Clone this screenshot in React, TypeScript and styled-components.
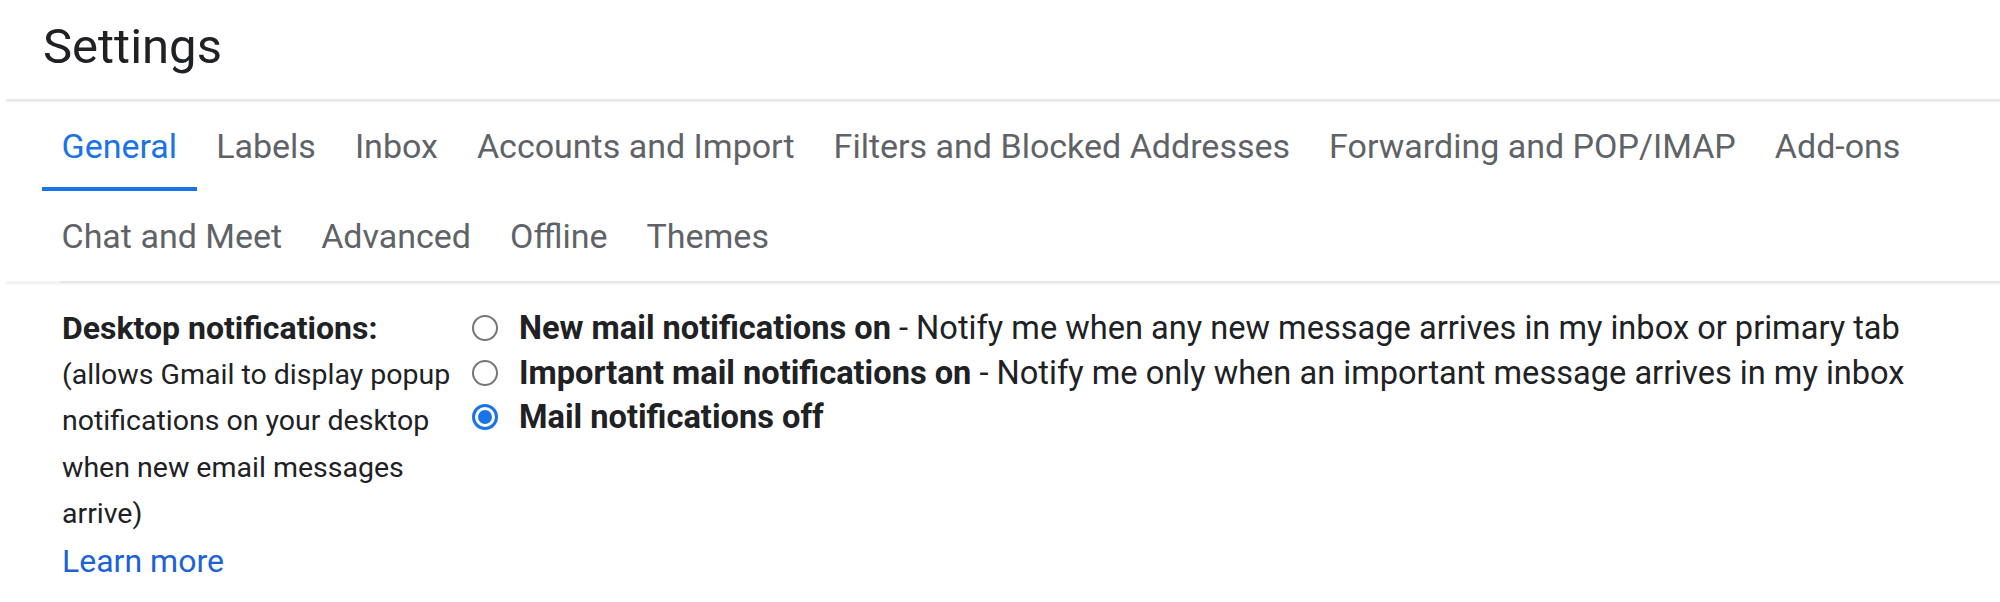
import React from "react";
import styled, { createGlobalStyle } from "styled-components";

const GlobalStyle = createGlobalStyle`
    html, body {
        margin: 0;
        padding: 0;
        background: #ffffff;
    }
    body {
        font-family: Roboto, "Liberation Sans", Arial, sans-serif;
        color: #202124;
        -webkit-font-smoothing: antialiased;
    }
`;

const Page = styled.div`
    width: 2000px;
    height: 602px;
    overflow: hidden;
    background: #ffffff;
`;

const Header = styled.header`
    height: 99px;
    box-sizing: border-box;
    padding: 18px 0 0 43px;
`;

const Title = styled.h1`
    margin: 0;
    font-size: 49px;
    font-weight: 400;
    line-height: 57px;
    color: #202124;
`;

const Divider = styled.div<{ $step?: boolean }>`
    height: 2px;
    margin-left: 6px;
    background: ${(props) =>
        props.$step
            ? "linear-gradient(to right, #f1f3f4 54px, #e6e7e9 54px)"
            : "#e8e9eb"};
    box-shadow: 0 1px 2px rgba(60, 64, 67, 0.1);
`;

const TabBar = styled.nav`
    display: flex;
    flex-wrap: wrap;
    padding-left: 42px;
`;

const Tab = styled.a<{ $active?: boolean }>`
    height: 90px;
    box-sizing: border-box;
    padding: 0 19.5px;
    display: flex;
    align-items: center;
    font-size: 34px;
    white-space: nowrap;
    cursor: pointer;
    color: ${(props) => (props.$active ? "#1a73e8" : "#5f6368")};
    box-shadow: ${(props) =>
        props.$active ? "inset 0 -4px 0 #1a73e8" : "none"};
`;

const Content = styled.section`
    display: flex;
    padding: 22px 0 0 62px;
`;

const LabelColumn = styled.div`
    width: 410px;
    flex-shrink: 0;
    line-height: 46.6px;
`;

const LabelTitle = styled.div`
    font-size: 32px;
    font-weight: 700;
    color: #202124;
`;

const LabelHint = styled.div`
    font-size: 28.5px;
    color: #202124;
`;

const LearnMore = styled.a`
    display: block;
    font-size: 32px;
    color: #1a62d6;
    text-decoration: none;
    cursor: pointer;
`;

const Options = styled.div`
    display: flex;
    flex-direction: column;
    padding-top: 1px;
`;

const OptionRow = styled.label`
    display: flex;
    align-items: center;
    gap: 21px;
    height: 44.5px;
    font-size: 32.6px;
    color: #202124;
    white-space: nowrap;
    cursor: pointer;
`;

const Radio = styled.span<{ $checked?: boolean }>`
    width: 26px;
    height: 26px;
    box-sizing: border-box;
    border-radius: 50%;
    flex-shrink: 0;
    display: flex;
    align-items: center;
    justify-content: center;
    border: ${(props) =>
        props.$checked ? "3px solid #1a73e8" : "2px solid #767676"};
    background: #ffffff;

    &::after {
        content: "";
        display: ${(props) => (props.$checked ? "block" : "none")};
        width: 14px;
        height: 14px;
        border-radius: 50%;
        background: #1a73e8;
    }
`;

const Strong = styled.b`
    font-weight: 700;
`;

const tabs = [
    "General",
    "Labels",
    "Inbox",
    "Accounts and Import",
    "Filters and Blocked Addresses",
    "Forwarding and POP/IMAP",
    "Add-ons",
    "Chat and Meet",
    "Advanced",
    "Offline",
    "Themes",
];

const options = [
    {
        title: "New mail notifications on",
        text: " - Notify me when any new message arrives in my inbox or primary tab",
        checked: false,
    },
    {
        title: "Important mail notifications on",
        text: " - Notify me only when an important message arrives in my inbox",
        checked: false,
    },
    {
        title: "Mail notifications off",
        text: "",
        checked: true,
    },
];

const App = () => {
    return (
        <Page>
            <GlobalStyle />
            <Header>
                <Title>Settings</Title>
            </Header>
            <Divider />
            <TabBar>
                {tabs.map((tab) => (
                    <Tab key={tab} $active={tab === "General"}>
                        {tab}
                    </Tab>
                ))}
            </TabBar>
            <Divider $step />
            <Content>
                <LabelColumn>
                    <LabelTitle>Desktop notifications:</LabelTitle>
                    <LabelHint>
                        (allows Gmail to display popup notifications on your
                        desktop when new email messages arrive)
                    </LabelHint>
                    <LearnMore>Learn more</LearnMore>
                </LabelColumn>
                <Options>
                    {options.map((opt) => (
                        <OptionRow key={opt.title}>
                            <Radio $checked={opt.checked} />
                            <span>
                                <Strong>{opt.title}</Strong>
                                {opt.text}
                            </span>
                        </OptionRow>
                    ))}
                </Options>
            </Content>
        </Page>
    );
};

export default App;
